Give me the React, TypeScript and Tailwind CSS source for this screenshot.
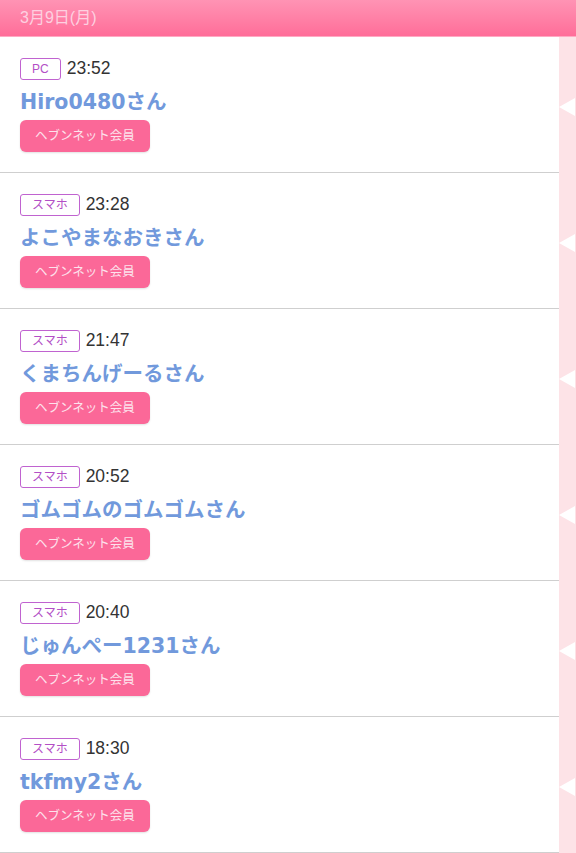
const rows = [
  { device: "PC", time: "23:52", name: "Hiro0480さん" },
  { device: "スマホ", time: "23:28", name: "よこやまなおきさん" },
  { device: "スマホ", time: "21:47", name: "くまちんげーるさん" },
  { device: "スマホ", time: "20:52", name: "ゴムゴムのゴムゴムさん" },
  { device: "スマホ", time: "20:40", name: "じゅんぺー1231さん" },
  { device: "スマホ", time: "18:30", name: "tkfmy2さん" },
];

export default function App() {
  return (
    <div
      className="w-[576px] h-[853px] overflow-hidden bg-white"
      style={{ fontFamily: '"Liberation Sans", "Noto Sans CJK JP", sans-serif' }}
    >
      {/* date header */}
      <div className="h-[37px] flex items-center px-5 bg-gradient-to-b from-[#ff93b4] to-[#ff6d99] border-b border-[#ffa9c3]">
        <span className="text-[16px] text-[#fdd0e0]">3月9日(月)</span>
      </div>

      {rows.map((r) => (
        <div key={r.time} className="flex h-[136px]">
          <div className="flex-1 border-b border-[#cfcfcf] pl-5 pt-[21px]">
            <div className="flex items-center gap-[6px]">
              <span className="h-[22px] px-[11px] flex items-center rounded-[3px] border border-[#c063d0] text-[12px] text-[#b34fc6] leading-none">
                {r.device}
              </span>
              <span className="text-[17.5px] text-[#333] leading-none">{r.time}</span>
            </div>
            <div
              className="mt-[9px] h-[26px] leading-[26px] text-[20.5px] font-bold text-[#7199dc] whitespace-nowrap"
              style={{ fontFamily: '"DejaVu Sans", "Noto Sans CJK JP", sans-serif' }}
            >
              {r.name}
            </div>
            <div className="mt-[5px] w-[130px] h-[32px] rounded-[6px] bg-[#fb6898] flex items-center justify-center text-[12.5px] text-[#fde2ec] shadow-[0_1px_2px_rgba(0,0,0,0.12)]">
              ヘブンネット会員
            </div>
          </div>
          <div className="w-[17px] bg-[#fde3e7] flex items-center">
            <div className="mt-[3px] w-0 h-0 border-y-[9px] border-y-transparent border-r-[16px] border-r-white" />
          </div>
        </div>
      ))}
    </div>
  );
}
